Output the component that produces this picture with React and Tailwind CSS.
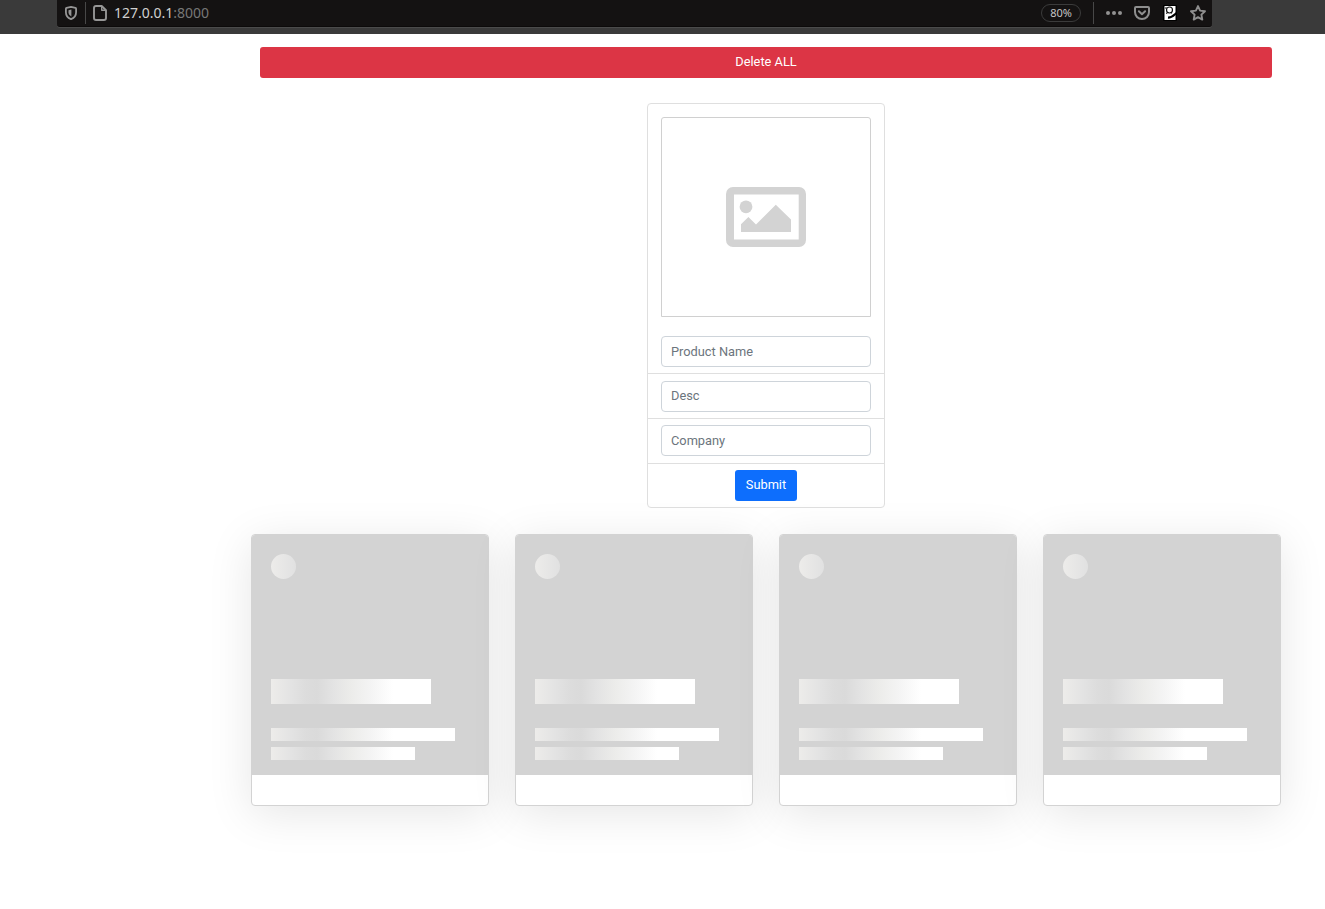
function ShieldIcon() {
  return (
    <svg width="12" height="14" viewBox="0 0 12 14" fill="none">
      <path d="M6 .9 10.400 1.800c.5.1.7.4.7.9v3.600c0 3.200-1.700 5.600-5.100 6.900C2.600 11.900.9 9.500.9 6.300V2.700c0-.5.2-.8.7-.9L6 .9Z" stroke="#969696" strokeWidth="1.800" strokeLinejoin="round" />
      <path d="M6.400 3.600v6.800C4.500 9.400 3.500 8 3.500 6.200V4.200L6.400 3.600Z" fill="#969696" />
    </svg>
  );
}

function PageIcon() {
  return (
    <svg width="14" height="16" viewBox="0 0 14 16" fill="none" stroke="#969696" strokeWidth="1.900" strokeLinejoin="round">
      <path d="M8.700 1H3C1.700 1 1 1.700 1 3v10c0 1.300.7 2 2 2h8c1.300 0 2-.7 2-2V5.200L8.700 1Z" />
      <path d="M8.700 1v4.300H13" strokeWidth="1.400" />
    </svg>
  );
}

function PocketIcon() {
  return (
    <svg width="16" height="14" viewBox="0 0 16 14" fill="none" stroke="#8e8e8e" strokeWidth="2" strokeLinecap="round" strokeLinejoin="round">
      <path d="M2 1h12c.7 0 1 .4 1 1v4c0 4-3 7-7 7S1 10 1 6V2c0-.6.3-1 1-1Z" />
      <path d="m4.900 5.300 3.100 3 3.100-3" />
    </svg>
  );
}

function ExtensionIcon() {
  return (
    <svg width="14" height="16" viewBox="0 0 14 16" fill="none">
      <rect width="14" height="16" rx="1" fill="#000" />
      <rect x="1.500" y="1" width="11" height="14" fill="#fff" />
      <circle cx="6.500" cy="5" r="3" stroke="#111" strokeWidth="1.200" />
      <path d="M2 3h2M3 8.500l2-1M8.500 7v1.500" stroke="#111" strokeWidth="1" />
      <path d="M5 12.700c3.500.2 5-1.700 8.500-4.700" stroke="#000" strokeWidth="2.200" />
    </svg>
  );
}

function StarIcon() {
  return (
    <svg width="16" height="16" viewBox="0 0 16 16" fill="none" stroke="#8e8e8e" strokeWidth="1.900" strokeLinejoin="round">
      <path d="m8 1.100 2.100 4.500 4.900.6-3.600 3.400.9 5L8 12.200l-4.300 2.400.9-5L1 6.200l4.900-.6L8 1.100Z" />
    </svg>
  );
}

function BrowserBar() {
  return (
    <header className="h-[34px] bg-[#3a3a3a] pl-[57px]">
      <div className="flex h-[27px] w-[1155px] items-center rounded-b-[3px] border-b border-[#0c0a0a] bg-[#141212] pl-2 pr-1.5 shadow-[0_1px_0_#4b4b4b]">
        <ShieldIcon />
        <div className="ml-2 h-[22px] w-px bg-[#484848]" />
        <div className="ml-[7px]">
          <PageIcon />
        </div>
        <div className="ml-[7px] font-['Noto_Sans',sans-serif] text-[14px] leading-[20px] text-[#d0d0d0]">
          127.0.0.1<span className="text-[#777]">:8000</span>
        </div>
        <div className="ml-auto flex h-[18px] w-10 items-center justify-center rounded-full border border-[#3b3b3b] font-['Noto_Sans',sans-serif] text-[11px] text-[#c4c4c4]">
          80%
        </div>
        <div className="ml-3 h-[22px] w-px bg-[#484848]" />
        <div className="ml-3 flex gap-0.5">
          <span className="size-1 rounded-full bg-[#929292]" />
          <span className="size-1 rounded-full bg-[#929292]" />
          <span className="size-1 rounded-full bg-[#929292]" />
        </div>
        <div className="ml-3">
          <PocketIcon />
        </div>
        <div className="ml-[13px]">
          <ExtensionIcon />
        </div>
        <div className="ml-[13px]">
          <StarIcon />
        </div>
      </div>
    </header>
  );
}

function PicturePlaceholder() {
  return (
    <div className="mx-[13px] mt-[13px] flex h-[200px] items-center justify-center rounded-t-[3px] border border-[#d0d0d0]">
      <svg width="80" height="60" viewBox="0 0 80 60" fill="#d3d3d3">
        <path fillRule="evenodd" d="M7 0h66a7 7 0 0 1 7 7v46a7 7 0 0 1-7 7H7a7 7 0 0 1-7-7V7a7 7 0 0 1 7-7Zm1 7.500v45h64.700v-45H8Z" />
        <circle cx="20" cy="19.800" r="6.400" />
        <path d="M15 37.300 22.400 30 30 37.500 49.800 17.700 65 32.500V45H15Z" />
      </svg>
    </div>
  );
}

function Field({ placeholder }) {
  return (
    <input
      className="block h-[31px] w-full rounded-[4px] border border-[#ced4da] bg-white px-[9px] pb-px text-[12.8px] text-[#212529] outline-none placeholder:text-[#6c757d] placeholder:opacity-100"
      placeholder={placeholder}
    />
  );
}

function ProductForm() {
  return (
    <form className="mx-auto mt-[25px] h-[405px] w-[238px] rounded-[4px] border border-[#dfdfdf] bg-white">
      <PicturePlaceholder />
      <div className="h-[57px] border-b border-[#dfdfdf] px-[13px] pt-[19px]">
        <Field placeholder="Product Name" />
      </div>
      <div className="h-[45px] border-b border-[#dfdfdf] px-[13px] pt-[7px] [&>input]:pb-[3px]">
        <Field placeholder="Desc" />
      </div>
      <div className="h-[45px] border-b border-[#dfdfdf] px-[13px] pt-1.5">
        <Field placeholder="Company" />
      </div>
      <div className="flex justify-center pt-1.5">
        <button type="button" className="h-[31px] w-[62px] rounded-[3px] bg-[#0d6efd] pb-px text-[12.8px] text-white">
          Submit
        </button>
      </div>
    </form>
  );
}

const shimmer =
  "bg-[linear-gradient(90deg,#edecea_0px,#e3e3e3_20px,#dcdcdc_35px,#dadada_46px,#e3e3e3_62px,#ececea_80px,#f4f4f4_100px,#ffffff_122px)]";

function SkeletonCard() {
  return (
    <div className="h-[272px] w-[238px] overflow-hidden rounded-[4px] border border-[#d3d3d3] bg-white shadow-[0_8px_45px_rgba(0,0,0,0.1)]">
      <div className="flex h-[240px] flex-col bg-[#d3d3d3] pl-[19px] pt-[19px]">
        <div className={`size-[25px] rounded-full ${shimmer}`} />
        <div className={`mt-[100px] h-[25px] w-[160px] ${shimmer}`} />
        <div className={`mt-6 h-[13px] w-[184px] ${shimmer}`} />
        <div className={`mt-1.5 h-[13px] w-[144px] ${shimmer}`} />
      </div>
    </div>
  );
}

export default function App() {
  return (
    <div className="h-[909px] w-[1325px] overflow-hidden bg-white font-[Roboto,sans-serif]">
      <BrowserBar />
      <main className="ml-[251px] w-[1030px] pt-[13px]">
        <div className="px-[9px]">
          <button type="button" className="block h-[31px] w-full rounded-[3px] bg-[#dc3545] pb-px text-[12.8px] text-white">
            Delete ALL
          </button>
        </div>
        <ProductForm />
        <div className="mt-[26px] flex gap-[26px]">
          <SkeletonCard />
          <SkeletonCard />
          <SkeletonCard />
          <SkeletonCard />
        </div>
      </main>
    </div>
  );
}
